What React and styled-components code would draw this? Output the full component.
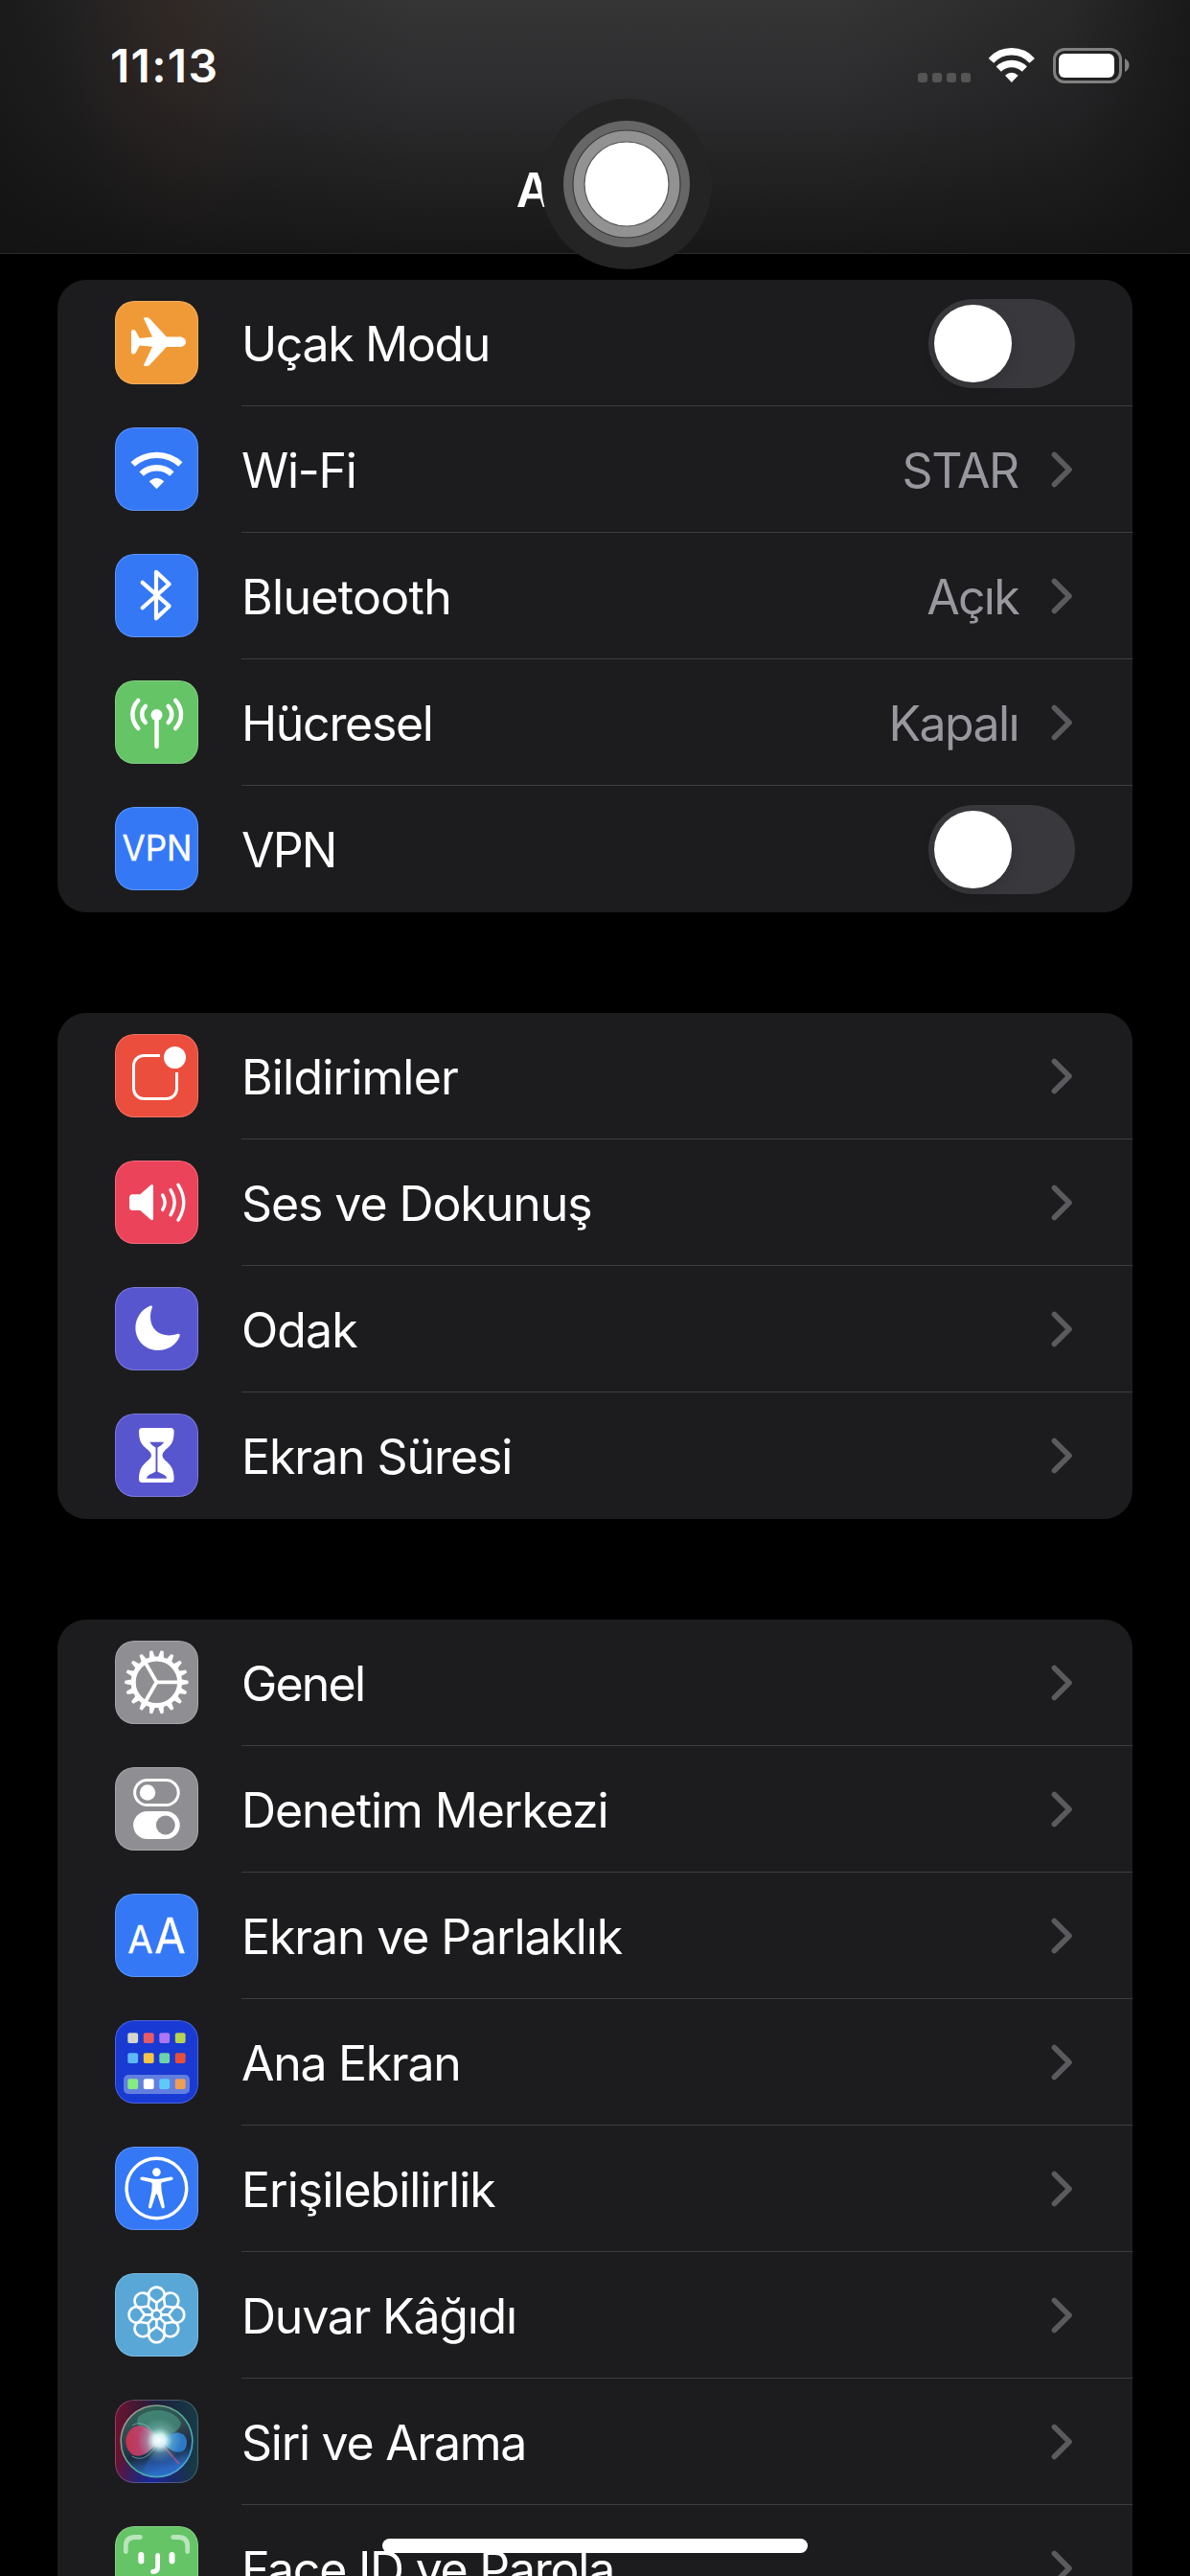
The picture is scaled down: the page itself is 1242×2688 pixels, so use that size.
import React from "react";
import styled, { createGlobalStyle } from "styled-components";

const GlobalStyle = createGlobalStyle`
body{
    margin:0;
    background-color:#000;
    font-family:Inter, "Liberation Sans", sans-serif;
    color:#fff;
}
`

const TEETH = Array.from({length:18}, (_, i)=>i*20);
const PETALS = Array.from({length:8}, (_, i)=>i*45);

const HOME_COLORS = [
    ["#d5d6cb", "#e95b64", "#ae76f3", "#b7d150"],
    ["#5cb8f7", "#f6c344", "#6ed3a8", "#e6503a"],
    ["#84ec80", "#ffffff", "#5fcaf8", "#f09d55"],
];
const HOME_ROWS = [13.3, 34.3, 61.3];

// every glyph is drawn on the 87x87 tile
const glyphs = {
    airplane:<path fill="#fff" d="M17 32Q17 30 19 30Q20.6 30 21.5 31.2L25.8 39L39 37.6L30.2 18.8Q29.8 17.3 31 17.3H33.5Q35 17.3 36 18.3L53.8 37.4H67.5C71.5 37.4 74 40 74 42.7C74 45.4 71.5 48 67.5 48H53.8L36 67.1Q35 68.1 33.5 68.1H31Q29.8 68.1 30.2 66.6L39 47.8L25.8 46.4L21.5 54.2Q20.6 55.4 19 55.4Q17 55.4 17 53.4Z"/>,
    wifi:<g fill="none" stroke="#fff" strokeWidth="6.3">
        <path d="M18.6 38.5A36.8 36.8 0 0 1 68.4 38.5"/>
        <path d="M27.6 48.5A23.4 23.4 0 0 1 59.4 48.5"/>
        <path fill="#fff" stroke="none" d="M35.7 56.3Q43.5 49 51.3 56.3L43.5 64.3Z"/>
    </g>,
    bluetooth:<path fill="none" stroke="#fff" strokeWidth="4.2" strokeLinecap="round" strokeLinejoin="round" d="M28.7 29.8L56.6 54.4L43 67.3V18.8L56.6 31.5L28.7 56.3"/>,
    cellular:<g fill="none" stroke="#fff" strokeWidth="4.5" strokeLinecap="round">
        <path d="M24.2 21A21 21 0 0 0 24.2 50"/>
        <path d="M31.8 26.8A12 12 0 0 0 31.8 44"/>
        <path d="M63.2 21A21 21 0 0 1 63.2 50"/>
        <path d="M55.6 26.8A12 12 0 0 1 55.6 44"/>
        <path d="M43.5 38V69"/>
        <circle cx="43.5" cy="36" r="6" fill="#fff" stroke="none"/>
    </g>,
    vpn:<text x="7.5" y="56" fontSize="37" fill="#fff" stroke="#fff" strokeWidth=".4" textLength="73" lengthAdjust="spacingAndGlyphs">VPN</text>,
    notifications:<g fill="none" stroke="#fff" strokeWidth="3">
        <path d="M47 22.5H30A10.5 10.5 0 0 0 19.5 33V57A10.5 10.5 0 0 0 30 67.5H54A10.5 10.5 0 0 0 64.5 57V40"/>
        <circle cx="62.5" cy="24.5" r="11.5" fill="#fff" stroke="none"/>
    </g>,
    sound:<g fill="none" stroke="#fff" strokeWidth="3.4" strokeLinecap="round">
        <path fill="#fff" stroke="none" d="M18.5 35.3H26.3L36.8 26Q40 23.5 40 27V60Q40 63.7 36.8 61.2L26.3 52H18.5Q15 52 15 48.5V38.8Q15 35.3 18.5 35.3Z"/>
        <path d="M49.7 36Q54.5 43.7 49.7 51.4"/>
        <path d="M58 30.6Q66.2 43.7 58 56.8"/>
        <path d="M66 25.3Q77.5 43.7 66 62.1"/>
    </g>,
    moon:<path fill="#fff" d="M36 20C27 24 21.4 33 21.4 42.5C21.4 55.5 31.5 66 45 66C55 66 64 60.5 67.5 51.5C68.3 49.3 67 48.3 65.5 48.8C62 50 59.5 50.4 56.5 50.4C45 50.4 37 43 37 31.5C37 27.5 37.6 24.5 38.9 21.5C39.5 19.6 38.2 19 36 20Z"/>,
    hourglass:<path fill="#fff" fillRule="evenodd" d="M28.5 15H58.2Q61.6 15 61.6 18.5C61.6 30 58.5 33 52.5 38Q49.4 41 49.4 43.7Q49.4 46.5 52.5 49C58.5 54 61.6 58 61.6 68.5Q61.6 72 58.2 72H28.5Q25 72 25 68.5C25 58 28.5 54 34.5 49Q38 46.5 38 43.7Q38 41 34.5 38C28.5 33 25 30 25 18.5Q25 15 28.5 15ZM36 29.7Q38.5 33.5 42.5 35.6V60.5Q40.5 62 36 63.8Q33 65.2 33 67.7H54Q54 65.2 51 63.8Q46.5 62 44.4 60.5V35.6Q48.8 33.5 51.3 29.7Z"/>,
    gear:<g transform="translate(43.4 43.3)" fill="none" stroke="#fff">
        <circle r="24.2" strokeWidth="5"/>
        {TEETH.map(a=><path key={a} transform={`rotate(${a})`} fill="#fff" stroke="none" d="M25.5 -3.1L33 -1.6Q33.6 0 33 1.6L25.5 3.1Z"/>)}
        {[0, 120, 240].map(a=><path key={a} transform={`rotate(${a})`} strokeWidth="3.8" d="M0 0H23"/>)}
    </g>,
    control:<g>
        <rect x="20.6" y="13.6" width="45.6" height="26" rx="13" fill="none" stroke="#fff" strokeWidth="3"/>
        <circle cx="34" cy="26.5" r="8.2" fill="#fff"/>
        <rect x="19.1" y="46" width="48.6" height="29" rx="14.5" fill="#fff"/>
        <circle cx="52.8" cy="60.5" r="9.9" fill="#8e8e93"/>
    </g>,
    display:<g fill="#fff" stroke="#fff" strokeWidth=".3" strokeLinejoin="round">
        <text x="13.3" y="61.8" fontSize="39" textLength="26.5" lengthAdjust="spacingAndGlyphs">A</text>
        <text x="41.3" y="61.8" fontSize="50.5" textLength="32.5" lengthAdjust="spacingAndGlyphs">A</text>
    </g>,
    home:<g>
        <rect x="9" y="57" width="69" height="20" rx="5" fill="#627fe0"/>
        {HOME_COLORS.map((row, r)=>row.map((color, c)=>
            <rect key={color} x={13.3+c*16.5} y={HOME_ROWS[r]} width="10.8" height="10.8" rx="2" fill={color}/>
        ))}
    </g>,
    accessibility:<g fill="#fff">
        <circle cx="43.4" cy="43.5" r="31.3" fill="none" stroke="#fff" strokeWidth="3.5"/>
        <circle cx="43.4" cy="26.6" r="4.3"/>
        <path d="M28.6 31.5L41 33.8H46L58.3 31.5C61 31.3 61.4 34.2 59 35L49.3 37.2Q48.2 37.6 48.2 39L48.6 46L51.8 62.2C52 64.8 49.3 65.3 48.5 63L44.3 50.2Q43.4 48.2 42.5 50.2L38.3 63C37.5 65.3 34.8 64.8 35 62.2L38.4 46L38.7 39Q38.7 37.6 37.6 37.2L28 35C25.4 34.2 26 31.3 28.6 31.5Z"/>
    </g>,
    flower:<g transform="translate(43.4 43.4)" fill="none" stroke="#fff" strokeWidth="2.6" strokeLinejoin="round">
        <circle r="5"/>
        {PETALS.map(a=><path key={a} transform={`rotate(${a})`} d="M0 -5V-12.5L-8.2 -18.6A8.4 8.4 0 1 1 8.2 -18.6L0 -12.5"/>)}
    </g>,
    siri:<g>
        <defs>
            <linearGradient id="siriBg" x1="0" y1="0" x2="1" y2="0">
                <stop offset="0" stopColor="#6d1230"/>
                <stop offset=".5" stopColor="#1d1f3a"/>
                <stop offset="1" stopColor="#173c48"/>
            </linearGradient>
            <radialGradient id="siriFloor" cx=".45" cy="1" r=".5">
                <stop offset="0" stopColor="#1b2a9a"/>
                <stop offset="1" stopColor="#1b2a9a" stopOpacity="0"/>
            </radialGradient>
            <linearGradient id="siriRing" x1="0" y1="0" x2="1" y2="1">
                <stop offset="0" stopColor="#c98a94"/>
                <stop offset=".45" stopColor="#4fae86"/>
                <stop offset="1" stopColor="#4aa0f0"/>
            </linearGradient>
            <linearGradient id="siriBall" x1="0" y1="0" x2=".25" y2="1">
                <stop offset="0" stopColor="#2e6a58"/>
                <stop offset=".45" stopColor="#31464e"/>
                <stop offset=".75" stopColor="#1b2c44"/>
                <stop offset="1" stopColor="#2b6fc4"/>
            </linearGradient>
            <linearGradient id="siriPink" x1="0" y1="0" x2="1" y2="0">
                <stop offset="0" stopColor="#e0304f"/>
                <stop offset=".6" stopColor="#c94a80"/>
                <stop offset="1" stopColor="#e8a0c0"/>
            </linearGradient>
            <radialGradient id="siriGlow">
                <stop offset="0" stopColor="#fff"/>
                <stop offset=".28" stopColor="#e4ffff" stopOpacity=".9"/>
                <stop offset=".6" stopColor="#9fe8e0" stopOpacity=".3"/>
                <stop offset="1" stopColor="#9fe8e0" stopOpacity="0"/>
            </radialGradient>
        </defs>
        <rect width="87" height="87" fill="url(#siriBg)"/>
        <rect width="87" height="87" fill="url(#siriFloor)"/>
        <circle cx="43.5" cy="43.3" r="37.3" fill="url(#siriBall)" stroke="url(#siriRing)" strokeWidth="1.6"/>
        <path fill="#4fa58c" opacity=".55" d="M46 42C30 34 20 26 24 19C34 8 58 8 68 22C72 30 60 36 46 42Z"/>
        <path fill="#2f62c8" opacity=".4" d="M48 46C40 56 32 66 30 72C42 79 58 78 66 70C62 62 54 54 48 46Z"/>
        <path fill="url(#siriPink)" opacity=".85" d="M46 42C38 30 28 24 19 29C9 36 9 50 18 57C28 63 39 52 46 42Z"/>
        <path fill="none" stroke="#8fd0d4" strokeWidth="1" opacity=".6" d="M46 42C38 28 27 21 18 27M46 42C40 56 29 66 18 59"/>
        <path fill="#2f86dd" opacity=".85" d="M48 43C55 36 64 32 71 36C77 41 76 51 70 54C62 57 54 50 48 43Z"/>
        <path stroke="#c75a8c" strokeWidth="2" opacity=".6" d="M50 48L67 67"/>
        <circle cx="46.5" cy="42.5" r="23" fill="url(#siriGlow)"/>
    </g>,
    face:<g fill="none" strokeLinecap="round" stroke="#fff">
        <path stroke="#bae5bb" strokeWidth="4.8" d="M11.3 26.5V21Q11.3 11.5 20.8 11.5H26.3M60.7 11.5H66.2Q75.7 11.5 75.7 21V26.5M11.3 60.5V66Q11.3 75.5 20.8 75.5H26.3M60.7 75.5H66.2Q75.7 75.5 75.7 66V60.5"/>
        <path strokeWidth="6" d="M27.3 30V36.5M59.5 30V36.5"/>
        <path strokeWidth="4.8" d="M44.6 30.5V43Q44.6 47.5 39.5 47.5M30 59Q43.5 70 57 59"/>
    </g>,
};

const groups = [
    [
        {id:"airplane", label:"Uçak Modu", spacing:-1.35, color:"#f09a37", toggle:true},
        {id:"wifi", label:"Wi-Fi", spacing:-1.3, color:"#3478f6", value:"STAR", valueSpacing:-1.3},
        {id:"bluetooth", label:"Bluetooth", spacing:-.7, color:"#3478f6", value:"Açık", valueSpacing:-1.7},
        {id:"cellular", label:"Hücresel", spacing:-1.3, color:"#65c466", value:"Kapalı", valueSpacing:-1.6},
        {id:"vpn", label:"VPN", spacing:-1.8, color:"#3478f6", toggle:true},
    ],
    [
        {id:"notifications", label:"Bildirimler", spacing:-.85, color:"#eb4e3d"},
        {id:"sound", label:"Ses ve Dokunuş", spacing:-1.08, color:"#eb445a"},
        {id:"moon", label:"Odak", spacing:-.9, color:"#5856ce"},
        {id:"hourglass", label:"Ekran Süresi", spacing:-1.08, color:"#5856ce"},
    ],
    [
        {id:"gear", label:"Genel", spacing:-1.8, color:"#8e8e93"},
        {id:"control", label:"Denetim Merkezi", spacing:-1.07, color:"#8e8e93"},
        {id:"display", label:"Ekran ve Parlaklık", spacing:-1.12, color:"#3478f6"},
        {id:"home", label:"Ana Ekran", spacing:-1.3, color:"#193ad3"},
        {id:"accessibility", label:"Erişilebilirlik", spacing:-1, color:"#3478f6"},
        {id:"flower", label:"Duvar Kâğıdı", spacing:-1.24, color:"#59a7d7"},
        {id:"siri", label:"Siri ve Arama", spacing:-1.27, color:"#1d1a3a"},
        {id:"face", label:"Face ID ve Parola", spacing:-1.25, color:"#65c466"},
    ],
];

function Row({item}) {
    return(<RowBox>
        <Tile $color={item.color}>
            <svg width="87" height="87" viewBox="0 0 87 87">{glyphs[item.id]}</svg>
        </Tile>
        <RowContent>
            <Label $spacing={item.spacing}>{item.label}</Label>
            {item.value && <Value $spacing={item.valueSpacing}>{item.value}</Value>}
            {item.toggle ? <Toggle><Knob/></Toggle> : <Chevron viewBox="0 0 23 38"><path d="M3.4 3.4L19 19L3.4 34.6"/></Chevron>}
        </RowContent>
    </RowBox>)
}

export default function App() {
    return(<Screen>
        <GlobalStyle/>
        <Header>
            <StatusBar>
                <Time>11:13</Time>
                <StatusIcons>
                    <Signal><i/><i/><i/><i/></Signal>
                    <svg width="48" height="37" viewBox="0 0 48 37" fill="none" stroke="#fff" strokeWidth="7.4">
                        <path d="M2.4 13.4A28.7 28.7 0 0 1 45.2 13.4"/>
                        <path d="M10.3 22.2A19 19 0 0 1 37.3 22.2"/>
                        <path fill="#fff" stroke="none" d="M17 28.7Q23.8 23 30.7 28.7L23.8 36Z"/>
                    </svg>
                    <Battery>
                        <BatteryBody/>
                        <svg width="5" height="14" viewBox="0 0 5 14"><path fill="#808081" d="M0 0Q4.5 2.5 4.5 7Q4.5 11.5 0 14Z"/></svg>
                    </Battery>
                </StatusIcons>
            </StatusBar>
            <Title>Ayarlar</Title>
        </Header>
        <List>
            {groups.map((group, i)=><Group key={i}>
                {group.map(item=><Row key={item.id} item={item}/>)}
            </Group>)}
        </List>
        <AssistiveTouch>
            <svg width="178" height="178" viewBox="-89 -89 178 178">
                <circle r="89" fill="#242424"/>
                <circle r="66" fill="#666"/>
                <circle r="56" fill="#929292" stroke="#3c3c3c" strokeWidth="1.2"/>
                <circle r="44" fill="#fff" stroke="#5c5c5c" strokeWidth="1.2"/>
            </svg>
        </AssistiveTouch>
        <HomeIndicator/>
    </Screen>)
}

const Screen = styled.div`
position:relative;
display:flex;
flex-direction:column;
width:1242px;
height:2688px;
overflow:hidden;
background-color:#000;
`

const Header = styled.header`
box-sizing:border-box;
flex:none;
display:flex;
flex-direction:column;
height:265px;
border-bottom:1px solid #2b2b2c;
background:
    radial-gradient(ellipse 130px 230px at 185px 40px, rgba(80,40,20,.2), rgba(80,40,20,0)),
    linear-gradient(90deg, rgba(18,18,19,.75), rgba(18,18,19,.25) 18%, rgba(18,18,19,0) 35%, rgba(18,18,19,0) 70%, rgba(18,18,19,.35) 90%, rgba(18,18,19,.8)),
    linear-gradient(#353536, #2c2c2e 40%, #171717);
`

const StatusBar = styled.div`
display:flex;
justify-content:space-between;
align-items:center;
height:136px;
padding:0 63px 0 115px;
`

const Time = styled.span`
font-size:48px;
font-weight:600;
letter-spacing:1.3px;
`

const StatusIcons = styled.div`
display:flex;
align-items:center;
gap:19px;
`

const Signal = styled.div`
display:flex;
align-items:flex-end;
gap:5px;
height:36px;
i{
    width:10px;
    height:10px;
    border-radius:3px;
    background-color:#555556;
}
`

const Battery = styled.div`
display:flex;
align-items:center;
gap:3px;
`

const BatteryBody = styled.div`
box-sizing:border-box;
width:72px;
height:37px;
padding:3px 7px 3px 3px;
border:3px solid #808081;
border-radius:12px;
&::before{
    content:"";
    display:block;
    width:58px;
    height:25px;
    border-radius:6px;
    background-color:#fff;
}
`

const Title = styled.h1`
margin:31px 0 0;
font-size:50px;
font-weight:600;
line-height:62px;
letter-spacing:-1.2px;
text-align:center;
`

const List = styled.main`
display:flex;
flex-direction:column;
gap:105px;
padding:27px 60px 0;
`

const RowContent = styled.div`
box-sizing:border-box;
flex:1;
display:flex;
align-items:center;
height:132px;
padding-right:60px;
border-bottom:1px solid #3d3d41;
`

const RowBox = styled.div`
display:flex;
align-items:flex-start;
padding-left:60px;
&:last-child ${RowContent}{
    border-bottom-color:transparent;
}
`

const Group = styled.section`
border-radius:30px;
background-color:#1c1c1e;
`

const Tile = styled.div`
position:relative;
flex:none;
width:87px;
height:87px;
margin:22px 45px 0 0;
border-radius:20px;
overflow:hidden;
background-color:${props=>props.$color};
svg{
    display:block;
}
&::after{
    content:"";
    position:absolute;
    inset:0;
    border-radius:20px;
    box-shadow:inset 0 0 0 1px rgba(255,255,255,.22);
}
`

const Label = styled.span`
flex:1;
padding-top:3px;
font-size:50px;
letter-spacing:${props=>props.$spacing}px;
white-space:nowrap;
`

const Value = styled.span`
padding-top:3px;
margin-right:34px;
font-size:50px;
letter-spacing:${props=>props.$spacing}px;
color:#98989f;
`

const Chevron = styled.svg`
width:23px;
height:38px;
margin-right:2px;
fill:none;
stroke:#5a5a5f;
stroke-width:5.6;
stroke-linecap:round;
stroke-linejoin:round;
`

const Toggle = styled.div`
box-sizing:border-box;
width:153px;
height:93px;
margin-top:1px;
padding:6px;
border-radius:47px;
background-color:#39393d;
`

const Knob = styled.div`
width:81px;
height:81px;
border-radius:50%;
background-color:#fff;
box-shadow:0 6px 16px rgba(0,0,0,.12);
`

const AssistiveTouch = styled.div`
position:absolute;
left:565px;
top:103px;
width:178px;
height:178px;
`

const HomeIndicator = styled.div`
position:absolute;
left:399px;
top:2649px;
width:444px;
height:15px;
border-radius:8px;
background-color:#fff;
`
